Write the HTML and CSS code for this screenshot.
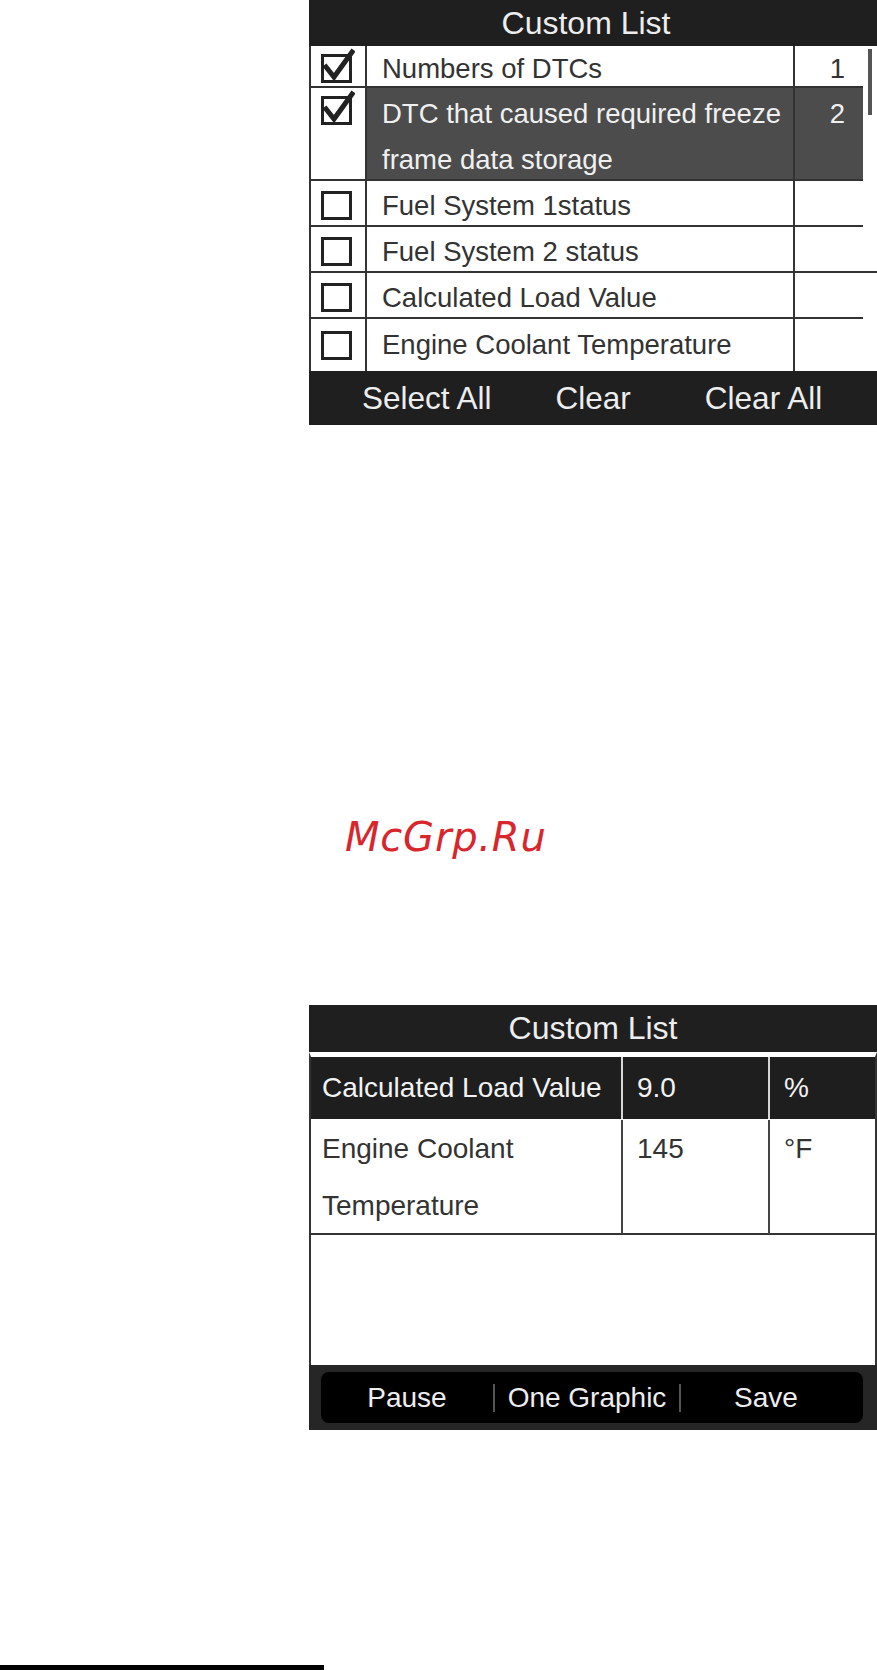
FILE: index.html
```html
<!DOCTYPE html>
<html lang="en">
<head>
    <meta charset="UTF-8">
    <meta name="viewport" content="width=device-width, initial-scale=1.0">
    <title>Custom List</title>
    <link rel="stylesheet" href="styles.css">
</head>
<body>

<div class="page">

    <!-- screen 1: pick the items -->
    <div class="screen">
        <div class="title-bar title-list">Custom List</div>

        <div class="list-body">
            <div class="rows">
                <div class="row row-first">
                    <div class="check-cell">
                        <svg class="box" viewBox="0 0 34 40" width="34" height="40"><rect x="1.5" y="7.5" width="28" height="26" fill="none" stroke="#222" stroke-width="3"/><path d="M3.5 17 L13 29 L32.5 2" fill="none" stroke="#222" stroke-width="5"/></svg>
                    </div>
                    <div class="label-cell">Numbers of DTCs</div>
                    <div class="value-cell">1</div>
                </div>
                <div class="row row-active">
                    <div class="check-cell">
                        <svg class="box" viewBox="0 0 34 40" width="34" height="40"><rect x="1.5" y="7.5" width="28" height="26" fill="none" stroke="#222" stroke-width="3"/><path d="M3.5 17 L13 29 L32.5 2" fill="none" stroke="#222" stroke-width="5"/></svg>
                    </div>
                    <div class="label-cell">DTC that caused required freeze frame data storage</div>
                    <div class="value-cell">2</div>
                </div>
                <div class="row">
                    <div class="check-cell">
                        <svg class="box" viewBox="0 0 34 40" width="34" height="40"><rect x="1.5" y="7.5" width="28" height="26" fill="none" stroke="#222" stroke-width="3"/></svg>
                    </div>
                    <div class="label-cell">Fuel System 1status</div>
                    <div class="value-cell"></div>
                </div>
                <div class="row row-wide-line">
                    <div class="check-cell">
                        <svg class="box" viewBox="0 0 34 40" width="34" height="40"><rect x="1.5" y="7.5" width="28" height="26" fill="none" stroke="#222" stroke-width="3"/></svg>
                    </div>
                    <div class="label-cell">Fuel System 2 status</div>
                    <div class="value-cell"></div>
                </div>
                <div class="row">
                    <div class="check-cell">
                        <svg class="box" viewBox="0 0 34 40" width="34" height="40"><rect x="1.5" y="7.5" width="28" height="26" fill="none" stroke="#222" stroke-width="3"/></svg>
                    </div>
                    <div class="label-cell">Calculated Load Value</div>
                    <div class="value-cell"></div>
                </div>
                <div class="row row-last">
                    <div class="check-cell">
                        <svg class="box" viewBox="0 0 34 40" width="34" height="40"><rect x="1.5" y="7.5" width="28" height="26" fill="none" stroke="#222" stroke-width="3"/></svg>
                    </div>
                    <div class="label-cell">Engine Coolant Temperature</div>
                    <div class="value-cell"></div>
                </div>
            </div>
            <div class="scroll-track"><div class="scroll-thumb"></div></div>
        </div>

        <div class="action-bar">
            <span class="act-select">Select All</span>
            <span class="act-clear">Clear</span>
            <span class="act-clear-all">Clear All</span>
        </div>
    </div>

    <div class="watermark">McGrp.Ru</div>

    <!-- screen 2: live data of the custom list -->
    <div class="screen data-screen">
        <div class="title-bar title-data">Custom List</div>

        <div class="data-body">
            <div class="data-row data-row-active">
                <div class="data-cell">Calculated Load Value</div>
                <div class="data-cell">9.0</div>
                <div class="data-cell">%</div>
            </div>
            <div class="data-row">
                <div class="data-cell">Engine Coolant Temperature</div>
                <div class="data-cell">145</div>
                <div class="data-cell">°F</div>
            </div>
        </div>

        <div class="soft-bar">
            <div class="soft-keys">
                <span class="key key-pause">Pause</span>
                <span class="key-sep"></span>
                <span class="key key-graph">One Graphic</span>
                <span class="key-sep"></span>
                <span class="key key-save">Save</span>
            </div>
        </div>
    </div>

    <div class="page-rule"></div>
</div>

</body>
</html>
```

FILE: styles.css
```css
:root {
    --bar-color: #1f1f1f;
    --bar-text: #ededed;
    --line-color: #333333;
    --row-text: #333333;
    --active-row: #4c4c4c;
}

* {
    box-sizing: border-box;
    margin: 0;
    padding: 0;
}

body {
    font-family: 'Liberation Sans', Arial, Helvetica, sans-serif;
    background: #ffffff;
    color: var(--row-text);
}

.page {
    width: 877px;
    height: 1670px;
    overflow: hidden;
}

.screen {
    width: 568px;
    margin-left: 309px;
}

/* title bars */
.title-bar {
    background: var(--bar-color);
    color: var(--bar-text);
    font-size: 32px;
    text-align: center;
}

.title-list {
    height: 46px;
    line-height: 46px;
    padding-right: 14px;
}

.title-data {
    height: 47px;
    line-height: 47px;
}

/* screen 1 list */
.list-body {
    display: flex;
    height: 325px;
    border-left: 2px solid var(--line-color);
}

.rows {
    width: 552px;
    display: flex;
    flex-direction: column;
}

.row {
    display: grid;
    grid-template-columns: 56px 428px 68px;
    height: 46px;
    line-height: 44px;
    font-size: 27.5px;
    border-bottom: 2px solid var(--line-color);
    overflow: hidden;
}

.row-wide-line {
    margin-right: -14px;
    width: 566px;
}

.row-first {
    height: 42px;
    line-height: 40px;
}

.row-active {
    height: 93px;
    line-height: 45.5px;
}

.row-last {
    flex: 1;
    border-bottom: none;
    line-height: 52px;
}

.check-cell {
    display: flex;
    justify-content: center;
    align-items: center;
    border-right: 2px solid var(--line-color);
}

.row-active .check-cell {
    align-items: flex-start;
    padding-top: 2px;
}

.label-cell,
.value-cell {
    padding-top: 3px;
}

.row-last .label-cell,
.row-last .value-cell {
    padding-top: 0;
}

.label-cell {
    padding-left: 15px;
    border-right: 2px solid var(--line-color);
}

.value-cell {
    text-align: right;
    padding-right: 18px;
}

.row-active .label-cell,
.row-active .value-cell {
    background: var(--active-row);
    color: #f0f0f0;
}

.scroll-track {
    width: 14px;
    padding: 3px 0 0 5px;
}

.scroll-thumb {
    width: 4px;
    height: 66px;
    background: #555555;
}

.action-bar {
    height: 54px;
    background: var(--bar-color);
    color: var(--bar-text);
    font-size: 31.5px;
    display: flex;
    align-items: center;
    padding-left: 53px;
}

.act-clear {
    margin-left: 64px;
}

.act-clear-all {
    margin-left: 74px;
}

/* watermark */
.watermark {
    margin: 389px 0 0 345px;
    height: 46px;
    font-family: 'DejaVu Sans', Verdana, sans-serif;
    font-style: italic;
    font-size: 40px;
    letter-spacing: 0.8px;
    line-height: 46px;
    color: #d8262c;
}

/* screen 2 data */
.data-screen {
    margin-top: 145px;
}

.data-body {
    height: 313px;
    border-left: 2px solid var(--line-color);
    border-right: 2px solid var(--line-color);
    border-top: 5px solid #ffffff;
}

.data-row {
    display: grid;
    grid-template-columns: 312px 147px 105px;
    height: 116px;
    font-size: 28px;
    line-height: 57px;
    padding-top: 1px;
    border-bottom: 2px solid var(--line-color);
}

.data-row-active {
    height: 62px;
    line-height: 62px;
    padding-top: 0;
    border-bottom: none;
    background: #1e1e1e;
    color: #f2f2f2;
}

.data-cell {
    padding-left: 14px;
    border-right: 2px solid #444444;
}

.data-cell:first-child {
    padding-left: 11px;
}

.data-cell:last-child {
    border-right: none;
}

.data-row-active .data-cell {
    border-right-color: #d6d6d6;
}

.data-row-active .data-cell:last-child {
    border-right: none;
}

.soft-bar {
    height: 65px;
    background: #262626;
    padding: 7px 14px 7px 12px;
}

.soft-keys {
    height: 51px;
    background: #000000;
    border-radius: 8px;
    display: flex;
    align-items: center;
    color: var(--bar-text);
    font-size: 28px;
}

.key {
    text-align: center;
}

.key-pause {
    width: 172px;
}

.key-graph {
    width: 184px;
}

.key-save {
    flex: 1;
    padding-right: 12px;
}

.key-sep {
    width: 2px;
    height: 28px;
    background: #555555;
}

.page-rule {
    margin-top: 235px;
    width: 324px;
    height: 5px;
    background: #000000;
}
```
